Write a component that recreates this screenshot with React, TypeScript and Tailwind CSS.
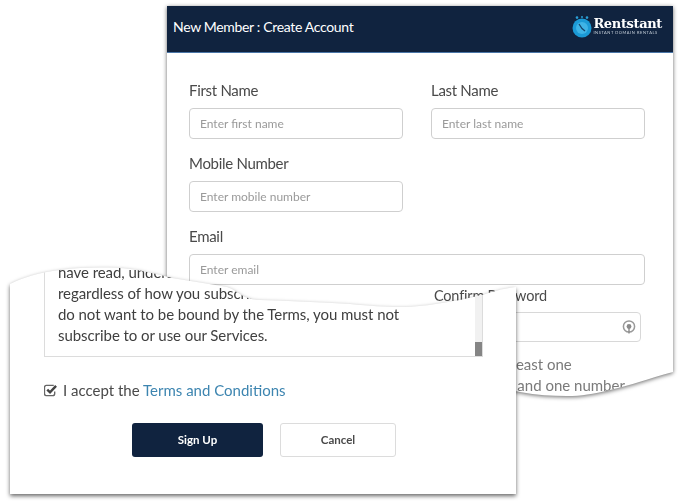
import React from "react";

const font = "font-['Lato','Noto_Sans',sans-serif]";

function Field({ label, placeholder, className = "" }: { label: string; placeholder: string; className?: string }) {
  return (
    <div className={`flex flex-col ${className}`}>
      <label className="text-[15px] leading-[20px] tracking-[-0.3px] text-[#4a4a4a] mb-[8px]">{label}</label>
      <div className="h-[31px] border border-[#cfcfcf] rounded-[4px] flex items-center pl-[10px] text-[12px] text-[#9a9a9a] bg-white">
        {placeholder}
      </div>
    </div>
  );
}

function Logo() {
  return (
    <div className="flex items-center gap-[1px]">
      <svg width="20" height="22" viewBox="0 0 20 22">
        <circle cx="5" cy="1.6" r="1.3" fill="#2a9fd6" />
        <circle cx="10" cy="1" r="1" fill="#2a9fd6" />
        <circle cx="15" cy="1.6" r="1.3" fill="#2a9fd6" />
        <circle cx="10" cy="12" r="9.5" fill="#1b9ad6" />
        <circle cx="10" cy="12" r="6" fill="#3fb4e6" />
        <path d="M7 8l3 4.5 3 2.5" stroke="#16456c" strokeWidth="1.3" fill="none" />
      </svg>
      <div className="flex flex-col items-start">
        <span className="font-['DejaVu_Serif',serif] font-bold text-[13px] leading-[12px] text-white tracking-[-0.35px]">Rentstant</span>
        <span className="text-[4px] leading-[6px] text-[#c9d2dc] tracking-[0.55px] whitespace-nowrap">INSTANT DOMAIN RENTALS</span>
      </div>
    </div>
  );
}

export default function App() {
  return (
    <div className={`relative w-[684px] h-[501px] bg-white overflow-hidden ${font}`}>
      {/* back window, torn at the bottom */}
      <div className="absolute left-[167px] top-[6px] drop-shadow-[0_1px_2px_rgba(0,0,0,0.6)]">
        <div className="w-[506px] h-[393px] bg-white flex flex-col [clip-path:path('M0_0H506V366C480_373_465_379_443_384C425_388_415_390_400_390C385_390_370_389_353_386L180_350L0_300Z')]">
          <div className="h-[47px] shrink-0 bg-[#10233f] border-b border-[#4a76a8] flex items-center justify-between pl-[6px] pr-[11px] pb-[4px]">
            <span className="text-[14px] tracking-[-0.33px] text-white mb-[2px]">New Member : Create Account</span>
            <Logo />
          </div>
          <div className="pt-[27px] px-[22px] flex flex-col gap-[14px]">
            <div className="grid grid-cols-[214px_214px] gap-x-[28px]">
              <Field label="First Name" placeholder="Enter first name" />
              <Field label="Last Name" placeholder="Enter last name" />
            </div>
            <div className="grid grid-cols-[214px_214px] gap-x-[28px]">
              <Field label="Mobile Number" placeholder="Enter mobile number" />
            </div>
            <Field label="Email" placeholder="Enter email" className="w-[456px]" />
          </div>
          <div className="ml-[267px] w-[207px] flex flex-col">
            <span className="text-[14.5px] leading-[20px] tracking-[-0.2px] text-[#4a4a4a] mt-[1px]">Confirm Password</span>
            <div className="h-[30px] mt-[6px] border border-[#d8d8d8] rounded-[4px] flex items-center justify-end pr-[3px]">
              <svg width="16" height="16" viewBox="0 0 16 16" fill="none">
                <circle cx="8" cy="7.5" r="5.6" stroke="#999999" strokeWidth="1.5" />
                <circle cx="8" cy="7.5" r="2.4" fill="#8a8a8a" />
                <path d="M8 9v5.5" stroke="#8a8a8a" strokeWidth="1.4" />
              </svg>
            </div>
            <p className="mt-[12px] text-[15px] leading-[21px] text-[#7a7a7a] whitespace-nowrap">
              Contains at least one<br />capital (A-Z) and one number
            </p>
          </div>
        </div>
      </div>

      {/* front window, torn at the top */}
      <div className="absolute left-[10px] top-[266px] drop-shadow-[0_2px_2px_rgba(0,0,0,0.6)]">
        <div className="w-[506px] h-[228px] bg-white flex flex-col [clip-path:path('M0_18C12_12_30_6_50_4C75_1_100_1_120_3C135_5_150_9_162_12C180_15_200_18_217_21C224_23_229_28_235_31C240_33_245_34_250_34C280_35_310_36_340_38C360_40_375_41_390_41C405_41_420_39_432_37C445_35_460_32_472_29C482_26_490_23_506_21V228H0Z')]">
          <div className="ml-[34px] w-[439px] h-[91px] shrink-0 border border-[#dcdcdc] flex justify-between">
            <p className="pl-[13px] pb-[10px] self-end text-[15px] leading-[21px] tracking-[-0.06px] text-[#3f3f3f] whitespace-nowrap">
              have read, understand and agree to be bound by the Terms,<br />
              regardless of how you subscribe to or use our Services. If you<br />
              do not want to be bound by the Terms, you must not<br />
              subscribe to or use our Services.
            </p>
            <div className="w-[7px] bg-[#f1f1f1] flex flex-col justify-end">
              <div className="h-[14px] bg-[#858585]" />
            </div>
          </div>
          <div className="ml-[34px] mt-[23px] flex items-center gap-[6px] text-[15px] leading-[20px] text-[#4a4a4a]">
            <svg width="13" height="13" viewBox="0 0 14 14" fill="none">
              <path d="M11.5 8v2.5a2 2 0 0 1-2 2h-7a2 2 0 0 1-2-2v-7a2 2 0 0 1 2-2h8" stroke="#666666" strokeWidth="1.5" />
              <path d="M3.5 6l3 3 6.5-7" stroke="#444444" strokeWidth="2.6" />
            </svg>
            <span>
              I accept the <span className="text-[#3d85b0]">Terms and Conditions</span>
            </span>
          </div>
          <div className="ml-[122px] mt-[23px] flex gap-[17px] text-[11.5px]">
            <div className="w-[131px] h-[34px] bg-[#10233f] rounded-[3px] text-white font-bold flex items-center justify-center">Sign Up</div>
            <div className="w-[116px] h-[34px] bg-white border border-[#dcdcdc] rounded-[3px] text-[#4a4a4a] font-bold flex items-center justify-center">Cancel</div>
          </div>
        </div>
      </div>
    </div>
  );
}
